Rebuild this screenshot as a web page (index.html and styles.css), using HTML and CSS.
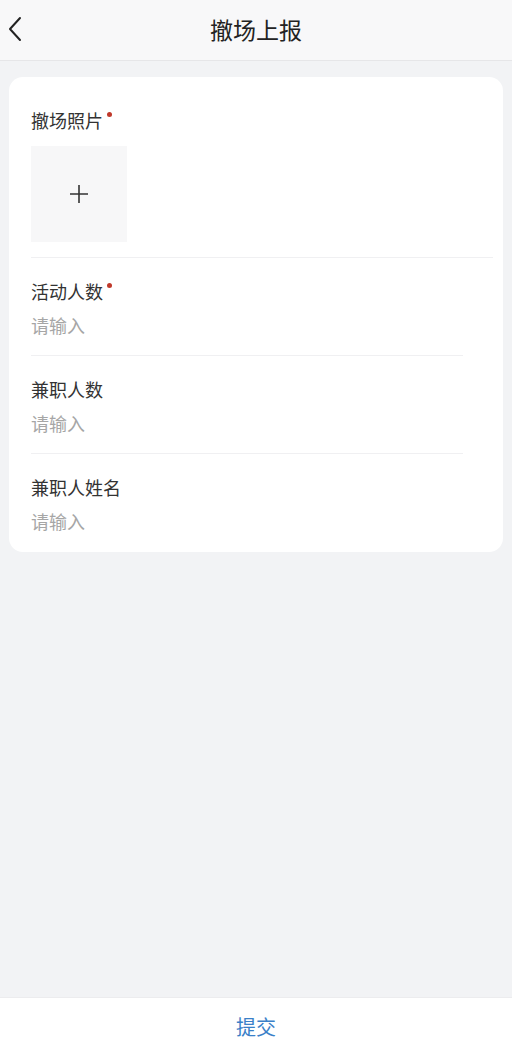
FILE: index.html
```html
<!DOCTYPE html>
<html lang="zh-CN">

<head>
  <meta charset="UTF-8">
  <meta name="viewport" content="width=device-width, initial-scale=1.0">
  <title>撤场上报</title>
  <link rel="stylesheet" href="styles.css">
</head>

<body>
  <div class="page">
    <div class="nav-bar">
      <span class="nav-back">
        <svg width="16" height="26" viewBox="0 0 16 26">
          <path d="M13 2 L3 13 L13 24" fill="none" stroke="#222" stroke-width="2" stroke-linecap="round" stroke-linejoin="round"/>
        </svg>
      </span>
      <div class="nav-title">撤场上报</div>
    </div>

    <div class="content">
      <div class="form-card">
        <div class="field field-photo">
          <div class="field-label">撤场照片<span class="required"></span></div>
          <div class="upload-box">
            <svg width="20" height="20" viewBox="0 0 20 20">
              <path d="M10 1 V19 M1 10 H19" stroke="#333" stroke-width="1.6"/>
            </svg>
          </div>
        </div>

        <div class="field">
          <div class="field-label">活动人数<span class="required"></span></div>
          <input class="field-input" type="text" placeholder="请输入">
        </div>

        <div class="field">
          <div class="field-label">兼职人数</div>
          <input class="field-input" type="text" placeholder="请输入">
        </div>

        <div class="field field-last">
          <div class="field-label">兼职人姓名</div>
          <input class="field-input" type="text" placeholder="请输入">
        </div>
      </div>
    </div>

    <div class="footer-bar">
      <button class="submit-btn">提交</button>
    </div>
  </div>
</body>
</html>
```

FILE: styles.css
```css
/* Estilos de la pagina */
body {
  margin: 0;
  font-family: "Noto Sans CJK SC", "Noto Sans", sans-serif;
  background-color: #f2f3f5;
  color: #333;
}

.page {
  height: 1052px;
  display: flex;
  flex-direction: column;
}

.nav-bar {
  height: 60px;
  display: flex;
  align-items: center;
  justify-content: center;
  position: relative;
  background-color: #f8f8f9;
  border-bottom: 1px solid #e6e6e8;
}

.nav-back {
  position: absolute;
  left: 7px;
  top: 16px;
  display: flex;
}

.nav-title {
  font-size: 23px;
  color: #222;
  line-height: 1;
  margin-top: -2px;
}

.content {
  flex: 1;
  padding: 16px 9px 0 9px;
}

.form-card {
  background-color: #fff;
  border-radius: 14px;
  padding: 0 10px 0 22px;
}

.field {
  padding: 21px 0 18px 0;
  border-bottom: 1px solid #f0f0f2;
  margin-right: 30px;
}

.field-photo {
  padding-top: 31px;
  padding-bottom: 15px;
  margin-right: 0;
}

.field-last {
  border-bottom: none;
  padding-bottom: 19px;
}

.field-label {
  font-size: 18px;
  line-height: 24px;
  color: #333;
}

.required {
  display: inline-block;
  width: 5px;
  height: 5px;
  border-radius: 50%;
  background-color: #c0392b;
  vertical-align: top;
  margin-left: 4px;
  margin-top: 4px;
}

.upload-box {
  width: 96px;
  height: 96px;
  margin-top: 14px;
  background-color: #f7f7f8;
  display: flex;
  align-items: center;
  justify-content: center;
}

.field-input {
  display: block;
  width: 100%;
  margin-top: 10px;
  padding: 0;
  border: none;
  outline: none;
  font-family: inherit;
  font-size: 18px;
  line-height: 24px;
  height: 24px;
  color: #333;
  background: transparent;
}

.field-input::placeholder {
  color: #a6a6a6;
}

.footer-bar {
  height: 54px;
  background-color: #fff;
  border-top: 1px solid #ececee;
  display: flex;
  align-items: center;
  justify-content: center;
}

.submit-btn {
  border: none;
  background: none;
  font-family: inherit;
  font-size: 20px;
  color: #3a80c8;
  padding: 0;
  margin-top: 2px;
  cursor: pointer;
}
```
